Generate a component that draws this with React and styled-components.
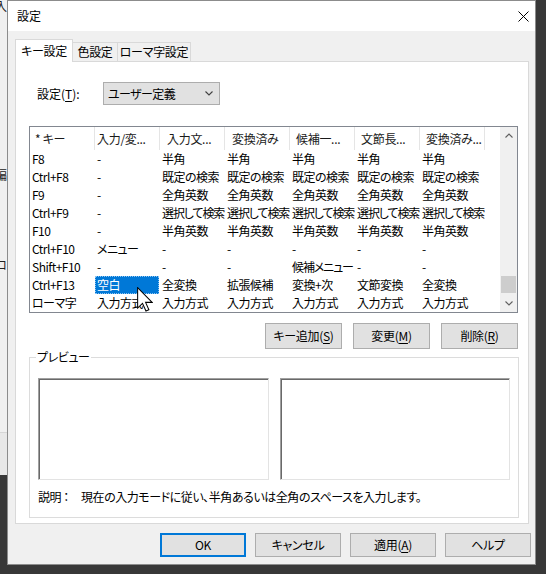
import React from 'react'
import styled, { createGlobalStyle } from 'styled-components'

const GlobalStyle = createGlobalStyle`
    html, body {
        margin: 0;
        padding: 0;
    }
    body {
        font-family: "Noto Sans CJK JP", "Noto Sans", sans-serif;
        font-size: 12px;
        line-height: 16px;
        color: #000;
        font-feature-settings: "palt";
        background: #383838;
    }
    * {
        box-sizing: border-box;
    }
`

const Desktop = styled.div`
    width: 546px;
    height: 574px;
    display: flex;
    align-items: flex-start;
    overflow: hidden;
    background: #383838;
`

const BehindWindow = styled.div`
    width: 7px;
    height: 475px;
    flex-shrink: 0;
    background: #f0f0f0;
    display: flex;
    flex-direction: column;
    overflow: hidden;
`

const BehindGlyph = styled.div`
    display: flex;
    justify-content: flex-end;
    height: 16px;
    margin-top: ${({ $top }) => $top}px;
    white-space: nowrap;
    color: #222;
`

const BehindStatus = styled.div`
    margin-top: auto;
    height: 43px;
    background: #e8e8e8;
    border-top: 1px solid #d6d6d6;
`

const Dialog = styled.div`
    width: 529px;
    height: 565px;
    flex-shrink: 0;
    border: 1px solid #8c8c8c;
    background: #f0f0f0;
    display: flex;
    flex-direction: column;
`

const TitleBar = styled.div`
    height: 30px;
    flex-shrink: 0;
    background: #fff;
    display: flex;
    align-items: center;
    justify-content: space-between;
    padding: 0 6px 0 9px;
`

const Body = styled.div`
    display: flex;
    flex-direction: column;
    padding: 8px 6px 0 7px;
`

const TabRow = styled.div`
    display: flex;
    align-items: flex-end;
    height: 22px;
`

const Tab = styled.div`
    width: ${({ $w }) => $w}px;
    height: ${({ $active }) => ($active ? 23 : 19)}px;
    margin-bottom: ${({ $active }) => ($active ? -1 : 0)}px;
    margin-left: ${({ $first }) => ($first ? 0 : -1)}px;
    background: ${({ $active }) => ($active ? '#fff' : '#f0f0f0')};
    border: 1px solid #d9d9d9;
    border-bottom: none;
    display: flex;
    align-items: center;
    justify-content: center;
    letter-spacing: -0.3px;
    position: relative;
    z-index: ${({ $active }) => ($active ? 1 : 0)};
`

const Panel = styled.div`
    height: 463px;
    background: #fff;
    border: 1px solid #d9d9d9;
    padding: 0 10px 0 13px;
    display: flex;
    flex-direction: column;
`

const SettingRow = styled.div`
    margin-top: 20px;
    padding-left: 8px;
    display: flex;
    align-items: center;
`

const Label = styled.span`
    width: 66px;
`

const U = styled.span`
    text-decoration: underline;
    text-underline-offset: 2px;
`

const Select = styled.div`
    width: 117px;
    height: 23px;
    background: #e1e1e1;
    border: 1px solid #adadad;
    display: flex;
    align-items: center;
    justify-content: space-between;
    padding: 0 6px 0 4px;
    letter-spacing: -0.6px;
`

const ListWrap = styled.div`
    margin-top: 21px;
    height: 187px;
    border: 1px solid #828790;
    display: flex;
    position: relative;
    background: #fff;
`

const ListContent = styled.div`
    flex: 1;
    overflow: hidden;
    display: flex;
    flex-direction: column;
`

const HeaderRow = styled.div`
    display: grid;
    grid-template-columns: repeat(7, 65px);
    height: 23px;
    flex-shrink: 0;
`

const HeaderCell = styled.div`
    border-right: 1px solid #e5e5e5;
    padding-left: ${({ $pad }) => $pad}px;
    line-height: 23px;
    white-space: nowrap;
    overflow: hidden;
    letter-spacing: -0.3px;
    color: #1a1a1a;
`

const Row = styled.div`
    display: grid;
    grid-template-columns: repeat(7, 65px);
    height: 18px;
    flex-shrink: 0;
`

const Cell = styled.div`
    padding-left: 2px;
    line-height: 18px;
    white-space: nowrap;
    overflow: hidden;
    letter-spacing: ${({ $tight }) => ($tight ? -1.1 : -0.5)}px;
    background: ${({ $selected }) => ($selected ? '#0078d7' : 'transparent')};
    color: ${({ $selected }) => ($selected ? '#fff' : '#000')};
    margin-right: ${({ $selected }) => ($selected ? 1 : 0)}px;
    outline: ${({ $selected }) => ($selected ? '1px dotted #8cc4f2' : 'none')};
    outline-offset: -1px;
`

const Scrollbar = styled.div`
    width: 17px;
    flex-shrink: 0;
    background: #f0f0f0;
    display: flex;
    flex-direction: column;
`

const ScrollArrow = styled.div`
    height: 17px;
    display: flex;
    align-items: center;
    justify-content: center;
`

const ScrollTrack = styled.div`
    flex: 1;
    display: flex;
    flex-direction: column;
    justify-content: flex-end;
    padding: 0 1px 2px;
`

const Thumb = styled.div`
    height: 17px;
    background: #cdcdcd;
`

const Cursor = styled.svg`
    position: absolute;
    left: 107px;
    top: 160px;
    z-index: 2;
`

const ButtonRow = styled.div`
    margin-top: 10px;
    display: flex;
    justify-content: flex-end;
    gap: 11px;
`

const Button = styled.button`
    width: ${({ $w }) => $w}px;
    height: ${({ $h }) => $h}px;
    padding: 0;
    margin: 0;
    font: inherit;
    color: #000;
    background: #e1e1e1;
    border: 1px solid ${({ $default }) => ($default ? '#0078d7' : '#adadad')};
    box-shadow: ${({ $default }) => ($default ? 'inset 0 0 0 1px #0078d7' : 'none')};
    display: flex;
    align-items: center;
    justify-content: center;
    letter-spacing: -0.3px;
`

const Group = styled.fieldset`
    margin: 0 -1px 0 0;
    border: 1px solid #dcdcdc;
    padding: 0 8px 12px;
    min-width: 0;
`

const Legend = styled.legend`
    padding: 0 1px;
    margin-left: -2px;
    line-height: 16px;
    letter-spacing: -0.4px;
`

const PreviewGrid = styled.div`
    margin-top: 13px;
    display: grid;
    grid-template-columns: 1fr 1fr;
    gap: 11px;
    height: 102px;
`

const PreviewBox = styled.div`
    background: #fff;
    border: 1px solid;
    border-color: #a0a0a0 #e3e3e3 #e3e3e3 #a0a0a0;
    box-shadow: inset 1px 1px 0 #696969;
`

const Description = styled.div`
    margin-top: 9px;
    display: flex;
    white-space: nowrap;
    letter-spacing: -0.45px;
`

const DescLabel = styled.span`
    width: 43px;
    flex-shrink: 0;
`

const ButtonBar = styled.div`
    margin-top: 9px;
    margin-right: -2px;
    display: flex;
    justify-content: flex-end;
    gap: 9px;
`

const headers = [
    { t: '* キー', pad: 5 },
    { t: '入力/変...', pad: 2 },
    { t: '入力文...', pad: 7 },
    { t: '変換済み', pad: 7 },
    { t: '候補一...', pad: 6 },
    { t: '文節長...', pad: 6 },
    { t: '変換済み...', pad: 6 },
]

const rows = [
    ['F8', '-', '半角', '半角', '半角', '半角', '半角'],
    ['Ctrl+F8', '-', '既定の検索', '既定の検索', '既定の検索', '既定の検索', '既定の検索'],
    ['F9', '-', '全角英数', '全角英数', '全角英数', '全角英数', '全角英数'],
    ['Ctrl+F9', '-', '選択して検索', '選択して検索', '選択して検索', '選択して検索', '選択して検索'],
    ['F10', '-', '半角英数', '半角英数', '半角英数', '半角英数', '半角英数'],
    ['Ctrl+F10', 'メニュー', '-', '-', '-', '-', '-'],
    ['Shift+F10', '-', '-', '-', '候補メニュー', '-', '-'],
    ['Ctrl+F13', '空白', '全変換', '拡張候補', '変換+次', '文節変換', '全変換'],
    ['ローマ字', '入力方式', '入力方式', '入力方式', '入力方式', '入力方式', '入力方式'],
]

// long Japanese labels need tighter spacing to fit the 65px column
const isLongCjk = (s) => s.length >= 6 && /[^\x00-\x7f]/.test(s)

const Chevron = ({ up, color = '#606060' }) => (
    <svg width="8" height="5" viewBox="0 0 8 5">
        <path
            d={up ? 'M0.5 4.5 L4 1 L7.5 4.5' : 'M0.5 0.5 L4 4 L7.5 0.5'}
            fill="none"
            stroke={color}
            strokeWidth="1.1"
        />
    </svg>
)

const App = () => {
    return (
        <>
            <GlobalStyle />
            <Desktop>
                <BehindWindow>
                    <BehindGlyph $top={-2}><span>入</span></BehindGlyph>
                    <BehindGlyph $top={153}><span>編</span></BehindGlyph>
                    <BehindGlyph $top={74}><span>ロ</span></BehindGlyph>
                    <BehindStatus />
                </BehindWindow>
                <Dialog>
                    <TitleBar>
                        <span>設定</span>
                        <svg width="11" height="11" viewBox="0 0 11 11">
                            <path d="M0.5 0.5 L10.5 10.5 M10.5 0.5 L0.5 10.5" stroke="#000" strokeWidth="1" />
                        </svg>
                    </TitleBar>
                    <Body>
                        <TabRow>
                            <Tab $w={58} $active $first>キー設定</Tab>
                            <Tab $w={46}>色設定</Tab>
                            <Tab $w={74}>ローマ字設定</Tab>
                        </TabRow>
                        <Panel>
                            <SettingRow>
                                <Label>設定(<U>T</U>):</Label>
                                <Select>
                                    <span>ユーザー定義</span>
                                    <Chevron color="#404040" />
                                </Select>
                            </SettingRow>
                            <ListWrap>
                                <ListContent>
                                    <HeaderRow>
                                        {headers.map((h) => (
                                            <HeaderCell key={h.t} $pad={h.pad}>{h.t}</HeaderCell>
                                        ))}
                                    </HeaderRow>
                                    {rows.map((r, i) => (
                                        <Row key={i}>
                                            {r.map((c, j) => (
                                                <Cell
                                                    key={j}
                                                    $selected={i === 7 && j === 1}
                                                    $tight={isLongCjk(c)}
                                                >
                                                    {c}
                                                </Cell>
                                            ))}
                                        </Row>
                                    ))}
                                </ListContent>
                                <Scrollbar>
                                    <ScrollArrow><Chevron up /></ScrollArrow>
                                    <ScrollTrack>
                                        <Thumb />
                                    </ScrollTrack>
                                    <ScrollArrow><Chevron /></ScrollArrow>
                                </Scrollbar>
                                <Cursor width="16" height="25" viewBox="0 0 12.5 19.5">
                                    <path
                                        d="M0.5 0.5 V16.5 L4.3 12.8 L7 18.8 L9.3 17.8 L6.7 12 H11.8 Z"
                                        fill="#fff"
                                        stroke="#000"
                                        strokeWidth="0.8"
                                        strokeLinejoin="miter"
                                    />
                                </Cursor>
                            </ListWrap>
                            <ButtonRow>
                                <Button $w={77} $h={26}>キー追加(<U>S</U>)</Button>
                                <Button $w={77} $h={26}>変更(<U>M</U>)</Button>
                                <Button $w={77} $h={26}>削除(<U>R</U>)</Button>
                            </ButtonRow>
                            <Group>
                                <Legend>プレビュー</Legend>
                                <PreviewGrid>
                                    <PreviewBox />
                                    <PreviewBox />
                                </PreviewGrid>
                                <Description>
                                    <DescLabel>説明 ：</DescLabel>
                                    <span>現在の入力モードに従い、半角あるいは全角のスペースを入力します。</span>
                                </Description>
                            </Group>
                        </Panel>
                        <ButtonBar>
                            <Button $w={86} $h={24} $default>OK</Button>
                            <Button $w={86} $h={24}>キャンセル</Button>
                            <Button $w={86} $h={24}>適用(<U>A</U>)</Button>
                            <Button $w={86} $h={24}>ヘルプ</Button>
                        </ButtonBar>
                    </Body>
                </Dialog>
            </Desktop>
        </>
    )
}

export default App
